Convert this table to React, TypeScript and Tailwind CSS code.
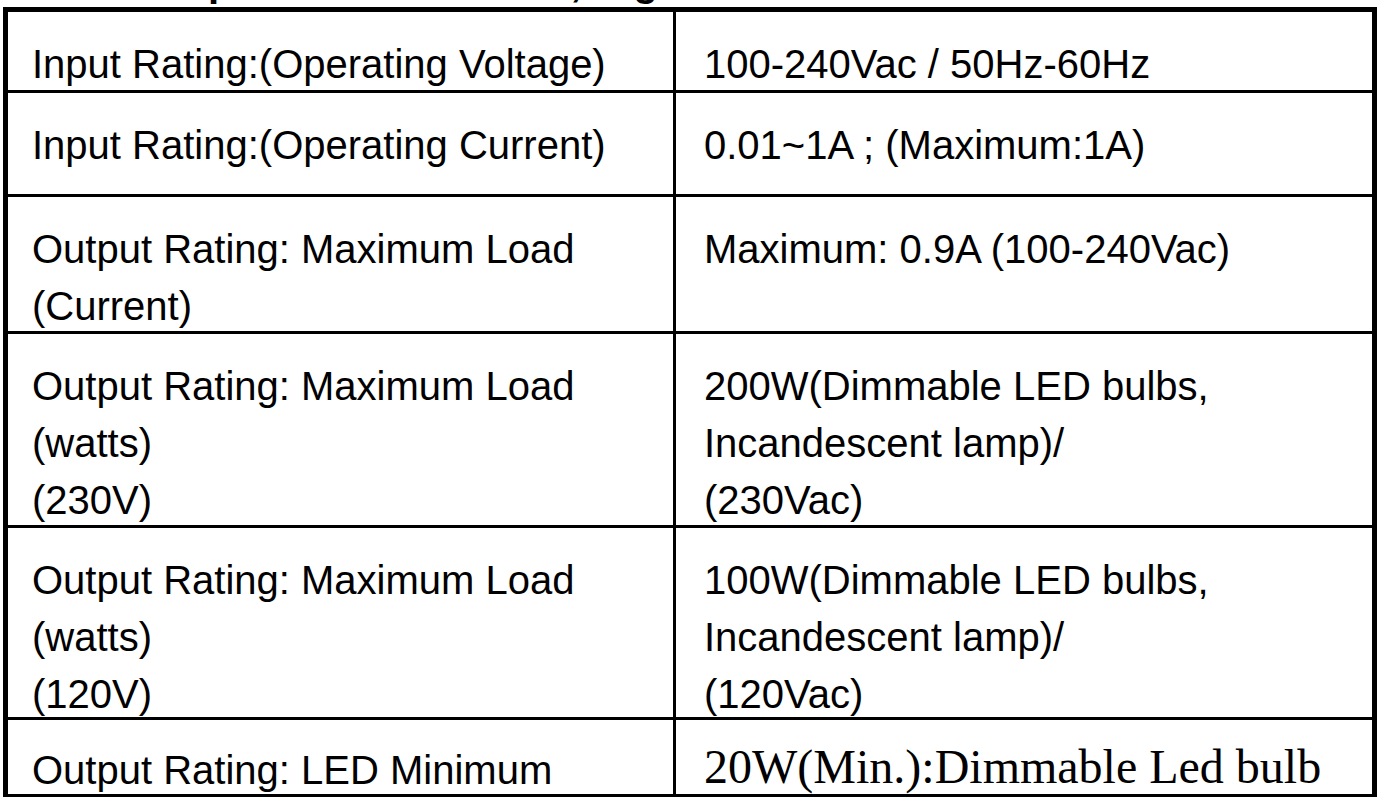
const rows: { label: string[]; value: string[]; h: string; serif?: boolean }[] = [
  { label: ['Input Rating:(Operating Voltage)'], value: ['100-240Vac / 50Hz-60Hz'], h: 'h-[81px]' },
  { label: ['Input Rating:(Operating Current)'], value: ['0.01~1A ; (Maximum:1A)'], h: 'h-[104px]' },
  { label: ['Output Rating: Maximum Load', '(Current)'], value: ['Maximum: 0.9A (100-240Vac)'], h: 'h-[137px]' },
  {
    label: ['Output Rating: Maximum Load', '(watts)', '(230V)'],
    value: ['200W(Dimmable LED bulbs,', 'Incandescent lamp)/', '(230Vac)'],
    h: 'h-[194px]',
  },
  {
    label: ['Output Rating: Maximum Load', '(watts)', '(120V)'],
    value: ['100W(Dimmable LED bulbs,', 'Incandescent lamp)/', '(120Vac)'],
    h: 'h-[192px]',
  },
  { label: ['Output Rating: LED Minimum'], value: ['20W(Min.):Dimmable Led bulb'], h: 'h-[77px]', serif: true },
];

function Lines({ lines }: { lines: string[] }) {
  return (
    <>
      {lines.map((l, i) => (
        <div key={i} className="whitespace-nowrap">
          {l}
        </div>
      ))}
    </>
  );
}

export default function App() {
  return (
    <div className="w-[1377px] h-[797px] overflow-hidden bg-white text-black font-['Liberation_Sans',Arial,sans-serif]">
      {/* heading, cut off by the top edge */}
      <div className="h-[7px] overflow-hidden">
        <div className="-mt-[38px] flex text-[40px] font-bold leading-[40px] whitespace-pre">
          <span className="ml-[208px]">p</span>
          <span className="ml-[338px]">,</span>
          <span className="ml-[52px]">g</span>
        </div>
      </div>

      <div className="ml-[3px] w-[1374px] border-x-[5px] border-t-[5px] border-black">
        {rows.map((r, i) => (
          <div key={i} className={`flex border-b-[3px] border-black ${r.h}`}>
            <div
              className={`w-[668px] shrink-0 border-r-[3px] border-black pl-[24px] text-[40px] leading-[57px] ${
                r.serif ? 'pt-[22px]' : 'pt-[24px]'
              }`}
            >
              <Lines lines={r.label} />
            </div>
            {r.serif ? (
              <div className="flex-1 pl-[28px] pt-[18px] font-['Liberation_Serif','Times_New_Roman',serif] text-[48px] leading-[57px]">
                <Lines lines={r.value} />
              </div>
            ) : (
              <div className="flex-1 pl-[28px] pt-[24px] text-[40px] leading-[57px]">
                <Lines lines={r.value} />
              </div>
            )}
          </div>
        ))}
      </div>
    </div>
  );
}
